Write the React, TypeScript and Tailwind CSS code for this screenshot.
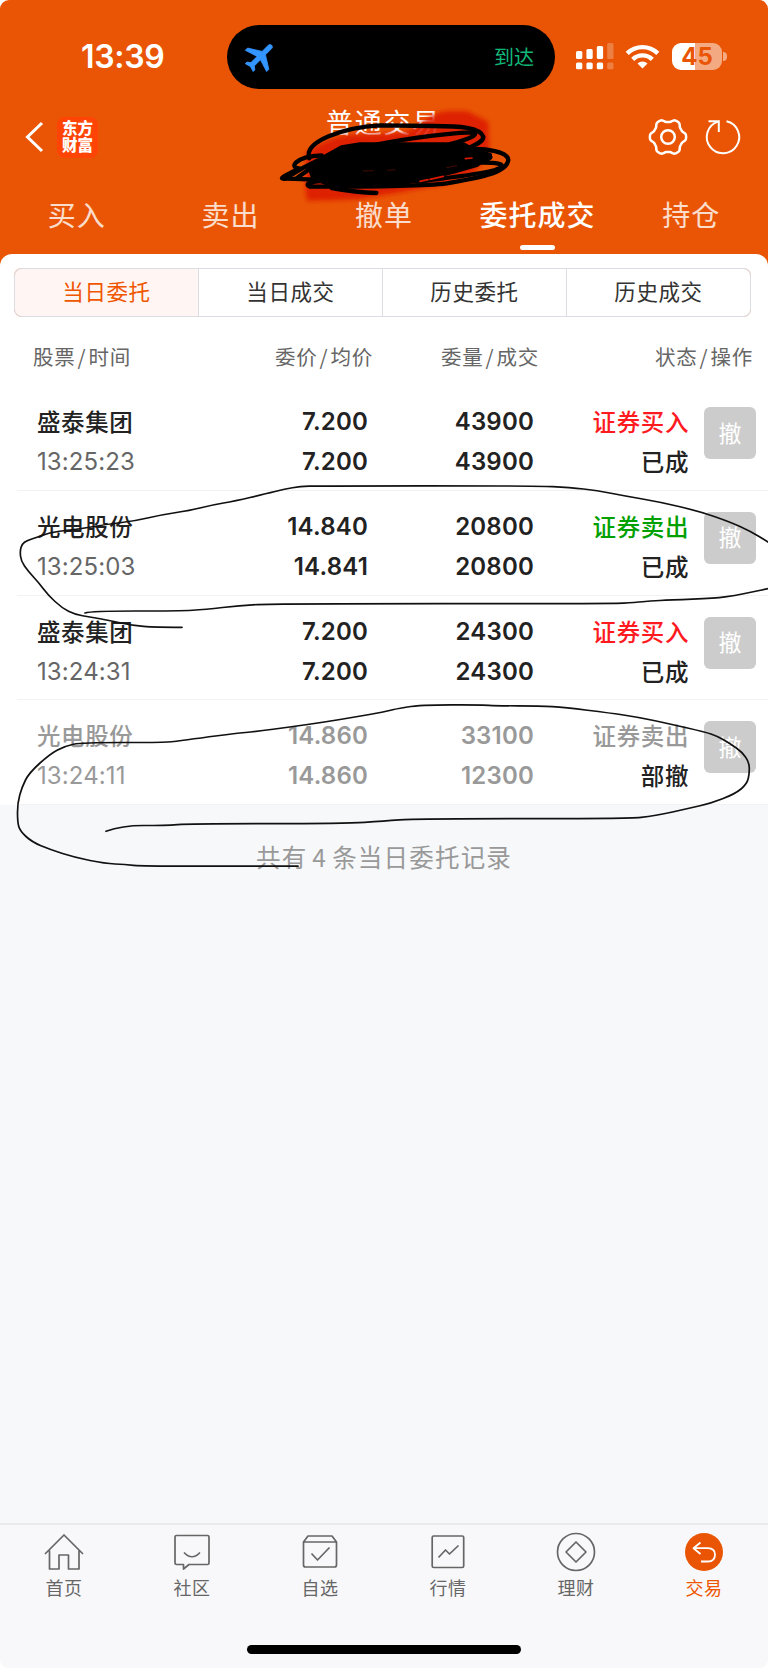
import clsx from "clsx"
import type { ReactNode } from "react"

type Point = [number, number]

interface Order {
  id: number
  name: string
  time: string
  price: string
  average: string
  volume: string
  filled: string
  side: string
  sideClass: string
  status: string
  muted?: boolean
}

const orders: Order[] = [
  { id: 1, name: "盛泰集团", time: "13:25:23", price: "7.200", average: "7.200", volume: "43900", filled: "43900", side: "证券买入", sideClass: "text-[#ff1a1f]", status: "已成" },
  { id: 2, name: "光电股份", time: "13:25:03", price: "14.840", average: "14.841", volume: "20800", filled: "20800", side: "证券卖出", sideClass: "text-[#00a000]", status: "已成" },
  { id: 3, name: "盛泰集团", time: "13:24:31", price: "7.200", average: "7.200", volume: "24300", filled: "24300", side: "证券买入", sideClass: "text-[#ff1a1f]", status: "已成" },
  { id: 4, name: "光电股份", time: "13:24:11", price: "14.860", average: "14.860", volume: "33100", filled: "12300", side: "证券卖出", sideClass: "text-[#999999]", status: "部撤", muted: true },
]

const tabs = ["买入", "卖出", "撤单", "委托成交", "持仓"]
const segments = ["当日委托", "当日成交", "历史委托", "历史成交"]

// Smooths a hand drawn stroke by curving through the midpoints
function smooth(points: Point[]) {
  let d = `M${points[0][0]} ${points[0][1]}`
  for (let i = 1; i < points.length - 1; i++) {
    const [x, y] = points[i]
    const [nx, ny] = points[i + 1]
    d += ` Q${x} ${y} ${(x + nx) / 2} ${(y + ny) / 2}`
  }
  const last = points[points.length - 1]
  return `${d} L${last[0]} ${last[1]}`
}

const strokeA: Point[] = [
  [182, 627.3], [155, 627.3], [132, 625.5], [110, 620.5], [90, 617], [75, 614.5], [62, 608], [48, 595], [39, 583], [28, 571], [21, 561], [20, 551],
  [22, 544], [27, 540.5], [38, 537], [52, 532], [80, 529], [105, 524.5], [135, 521], [160, 515], [190, 510.5], [212, 505], [235, 501],
  [265, 494], [285, 489], [300, 486.5], [318, 485.8], [535, 485.8], [570, 487.5], [597, 490.5], [625, 496], [660, 502], [700, 511.5],
  [730, 522], [750, 531], [769, 542.5],
]
const strokeB: Point[] = [
  [85, 613], [91, 611], [180, 611], [205, 609.5], [240, 605.5], [275, 603.6], [612, 603.6], [635, 602.5], [650, 601], [670, 600], [715, 598.3],
  [735, 595.5], [752, 592], [769, 588.5],
]
const strokeC: Point[] = [
  [106, 831.3], [122, 825.5], [165, 825.5], [190, 823.6], [345, 823.6], [384, 821], [415, 818.6], [627, 818.6], [655, 816], [690, 808],
  [710, 803.5], [735, 794], [747, 784], [749.5, 773], [749, 762], [742, 752], [730, 743.5], [717, 736], [705, 732], [670, 724], [640, 717.5],
  [610, 713], [565, 707.5], [540, 705.8], [495, 705.8], [483, 704.8], [420, 705], [395, 709], [384, 712], [355, 717], [325, 722],
  [290, 727], [256, 731.5], [235, 733.5], [200, 738], [175, 741.5], [160, 742.5], [82, 742.5], [65, 746], [50, 754], [29, 773], [22, 787],
  [17.5, 803], [17.5, 822], [20, 831], [32, 842], [50, 849.5], [75, 857.5], [105, 863.5], [125, 864.5], [142, 866.2], [298, 866.2],
]

const gear: Point[] = Array.from({ length: 73 }, (_, i) => {
  const a = (i * Math.PI) / 36
  const r = 16.6 + 1.6 * Math.tanh(2 * Math.cos(6 * a))
  return [20 + r * Math.cos(a), 20 + r * Math.sin(a)]
})

function StatusBar() {
  return (
    <div className="flex h-[113px] items-center">
      <div className="w-[227px] pl-[81px] font-['Inter'] text-[32px] leading-[40px] font-semibold tracking-[-0.3px]">13:39</div>
      <div className="flex h-[64px] w-[328px] items-center justify-between rounded-full bg-black pr-[21px] pl-[15px]">
        <svg width="38" height="38" viewBox="0 0 24 24">
          <path
            transform="rotate(45 12 12)"
            fill="#3395ff"
            stroke="#3395ff"
            strokeWidth=".5"
            strokeLinejoin="round"
            d="M21 16v-2l-8-5V3.5c0-.83-.67-1.5-1.5-1.5S10 2.67 10 3.5V9l-8 5v2l8-2.5V19l-2 1.5V22l3.5-1 3.5 1v-1.5L13 19v-5.5l8 2.5z"
          />
        </svg>
        <span className="text-[20px] text-[#12b878]">到达</span>
      </div>
      <svg className="ml-[21px]" width="38" height="28" viewBox="0 -2 38 28" fill="white">
        <rect x="0" y="6" width="6.3" height="8" rx="1.5" />
        <rect x="10.4" y="4" width="6.3" height="10" rx="1.5" />
        <rect x="20.8" y="1" width="6.3" height="13" rx="1.5" />
        <rect x="31.2" y="-2" width="6.3" height="16" rx="1.5" opacity=".25" />
        <rect x="0" y="17.500" width="6.3" height="6.800" rx="1.5" />
        <rect x="10.4" y="17.500" width="6.3" height="6.800" rx="1.5" />
        <rect x="20.8" y="17.500" width="6.3" height="6.800" rx="1.5" />
        <rect x="31.2" y="17.500" width="6.3" height="6.800" rx="1.5" opacity=".25" />
      </svg>
      <svg className="ml-[11px]" width="35" height="25" viewBox="0 0 35 25" fill="none" stroke="white" strokeWidth="4.4">
        <path d="M2.2 9.3a22 22 0 0 1 30.6 0" />
        <path d="M7.7 15.4a14 14 0 0 1 19.6 0" />
        <path d="M17.500 24.500l-5-5a7.200 7.200 0 0 1 10 0z" fill="white" stroke="none" />
      </svg>
      <div className="ml-[12px] flex h-[27px] w-[50px] items-center justify-center rounded-[9px] bg-linear-to-r from-white from-45% to-white/50 to-45% font-['Inter'] text-[24px] leading-none font-bold text-[#e95504]">
        45
      </div>
      <div className="ml-[1px] h-[9px] w-[4px] rounded-r-full bg-white/50" />
    </div>
  )
}

function TitleBar() {
  return (
    <div className="flex h-[64px] items-center">
      <svg className="ml-[24px]" width="22" height="34" viewBox="0 0 22 34" fill="none" stroke="white" strokeWidth="3">
        <path d="M18 3L3.500 17L18 31" />
      </svg>
      <div className="ml-[11px] flex h-[41px] w-[41px] items-center justify-center rounded-[8px] bg-[#ff4405] pb-[2px] text-[15.500px] leading-[17.500px] font-black">
        <span className="w-[31px] break-all">东方财富</span>
      </div>
      <div className="flex h-full flex-1 justify-center pt-[1px] pl-[21px] text-[27px] leading-[32px] tracking-[1.800px]">普通交易</div>
      <svg className="mr-[15px]" width="40" height="40" viewBox="0 0 40 40" fill="none" stroke="white" strokeWidth="2.500" strokeLinejoin="round">
        <path d={smooth(gear) + "Z"} />
        <circle cx="20" cy="20" r="6.800" />
      </svg>
      <svg className="mr-[25px]" width="40" height="40" viewBox="0 0 40 40" fill="none" stroke="white" strokeWidth="2">
        <path d="M23.500 4.200A16.200 16.200 0 1 1 15 4.600" />
        <path d="M5.500 4.200H15.800V15" />
      </svg>
    </div>
  )
}

function OrderRow({ order }: { order: Order }) {
  return (
    <div className="relative grid h-[104.800px] grid-cols-[181px_150px_166px_155px_68px] pl-[37px] text-[23.500px] leading-[40px] font-medium text-[#222222]">
      <div className={clsx("pt-[15px]", order.muted && "text-[#999999]")}>
        <p className="tracking-[0.600px]">{order.name}</p>
        <p className={clsx("mt-px font-['Inter'] text-[24px] font-normal tracking-[0.100px]", !order.muted && "text-[#666666]")}>{order.time}</p>
      </div>
      <div className={clsx("pt-[16px] text-right font-['Inter'] text-[24px] font-semibold tracking-[0.200px]", order.muted && "text-[#999999]")}>
        <p>{order.price}</p>
        <p>{order.average}</p>
      </div>
      <div className={clsx("pt-[16px] text-right font-['Inter'] text-[24px] font-semibold tracking-[0.200px]", order.muted && "text-[#999999]")}>
        <p>{order.volume}</p>
        <p>{order.filled}</p>
      </div>
      <div className="pt-[15px] text-right tracking-[0.600px]">
        <p className={order.sideClass}>{order.side}</p>
        <p>{order.status}</p>
      </div>
      <button className="mt-[21px] ml-[15px] flex h-[52px] w-[52px] items-center justify-center rounded-[6px] bg-[#cccccc] pb-[3px] text-[23px] font-normal text-white">撤</button>
      <div className="absolute right-0 bottom-0 left-[17px] h-px bg-[#f2f2f3]" />
    </div>
  )
}

function NavItem({ label, active, children }: { label: string; active?: boolean; children: ReactNode }) {
  return (
    <div className={clsx("flex flex-1 flex-col items-center pt-[7px]", active ? "text-[#ee5500]" : "text-[#666666]")}>
      <svg width="40" height="40" viewBox="0 0 40 40" fill="none" stroke="currentColor" strokeWidth="1.700" strokeLinejoin="round">
        {children}
      </svg>
      <span className="mt-[2px] text-[18px] leading-[26px] tracking-[0.600px]">{label}</span>
    </div>
  )
}

function Scribble() {
  return (
    <svg className="absolute top-[90px] left-[260px]" width="270" height="120" viewBox="0 0 810 360" fill="none" stroke="black" strokeWidth="13" strokeLinecap="round" strokeLinejoin="round">
      <defs>
        <filter id="soft" x="-10%" y="-10%" width="120%" height="120%">
          <feGaussianBlur stdDeviation="6" />
        </filter>
      </defs>
      <path
        filter="url(#soft)"
        fill="#dc1800"
        fillOpacity=".86"
        stroke="none"
        d="M138 190Q190 145 270 134L420 128Q455 125 490 92Q530 66 560 64H622L684 95L688 190L640 250L560 282L410 308L290 328L145 332Q136 325 138 300z"
      />
      <path
        fill="black"
        d="M150 235L190 203L245 172L300 163H610L640 180L690 195L650 225L580 245L480 270L380 285H215L160 265z"
      />
      <path d="M148 205C130 155 250 112 360 106L520 108C600 108 660 112 670 140C670 158 640 165 615 180" />
      <path d="M300 175C400 150 550 130 635 127C660 130 640 145 570 162" />
      <path d="M185 196C100 200 88 235 118 235C80 255 50 268 75 266C110 265 250 275 330 270" />
      <path d="M75 266L130 233L190 203M110 265L165 225" />
      <path d="M620 178C680 174 744 185 745 210C740 250 650 265 560 280C480 290 300 290 150 290C130 282 150 270 240 272" />
      <path d="M630 182C720 200 700 205 640 218C720 215 750 225 705 240C650 255 570 262 470 275" />
      <path d="M215 294C270 304 310 308 349 309" />
      <path d="M616 206L636 204M510 268L550 259M480 274L504 269" stroke="#dc1800" strokeWidth="5" />
      <path d="M310 243L340 242M382 241L405 239M560 233L590 227" stroke="#651000" strokeWidth="2" />
    </svg>
  )
}

export default function App() {
  return (
    <div className="relative h-[1669px] w-[768px] overflow-hidden bg-white font-['Noto_Sans_CJK_SC',sans-serif]">
      <div className="flex h-[1668px] flex-col overflow-hidden rounded-[9px] bg-[#f7f8fa]">
        <div className="bg-[#e95504] text-white">
          <header className="h-[254px]">
            <StatusBar />
            <div className="-mt-[8px]">
              <TitleBar />
            </div>
            <nav className="mt-[21px] flex text-[28px] leading-[48px] tracking-[1px]">
              {tabs.map((tab) => {
                const active = tab === "委托成交"
                return (
                  <div key={tab} className={clsx("flex flex-1 flex-col items-center", active ? "font-medium" : "font-normal text-white/80")}>
                    {tab}
                    {active && <span className="mt-[7px] h-[5px] w-[35px] rounded-full bg-white" />}
                  </div>
                )
              })}
            </nav>
          </header>
          <div className="h-[132px] rounded-t-[12px] bg-white pt-[14px]">
            <div className="mr-[17px] ml-[14px] flex h-[49px] rounded-[8px] bg-[#f0a27c]">
              {segments.map((segment, i) => (
                <div
                  key={segment}
                  className={clsx(
                    "flex flex-1 items-center justify-center border-y border-r border-[#dcdde2] pb-[2px] text-[21.500px] tracking-[0.600px]",
                    i === 0 ? "rounded-l-[8px] border-l bg-[#fff5f2] text-[#f05500]" : "bg-white text-[#333333]",
                    i === 3 && "rounded-r-[8px]",
                  )}
                >
                  {segment}
                </div>
              ))}
            </div>
            <div className="mt-[19px] grid grid-cols-[180px_160px_166px_214px] pl-[33px] text-[20.500px] leading-[40px] tracking-[0.800px] text-[#666666]">
              <span>股票<i className="px-[2px] not-italic">/</i>时间</span>
              <span className="text-right">委价<i className="px-[2px] not-italic">/</i>均价</span>
              <span className="text-right">委量<i className="px-[2px] not-italic">/</i>成交</span>
              <span className="text-right">状态<i className="px-[2px] not-italic">/</i>操作</span>
            </div>
          </div>
        </div>

        <main className="bg-white">
          {orders.map((order) => (
            <OrderRow key={order.id} order={order} />
          ))}
        </main>
        <p className="pt-[32px] text-center text-[24.500px] leading-[40px] tracking-[1.200px] text-[#999999]">
          共有<span className="mx-[5px]">4</span>条当日委托记录
        </p>

        <footer className="mt-auto h-[145px] border-t-2 border-[#e9eaec] bg-[#f8f8fa]">
          <div className="flex">
            <NavItem label="首页">
              <path d="M1 22L20 3L39 22M5.500 18.500V37H15V23H24.500V37H35V18.500" />
            </NavItem>
            <NavItem label="社区">
              <path d="M4.500 3.500H35.500Q37 3.500 37 5V31Q37 32.500 35.500 32.500H17L11.500 37V32.500H4.500Q3 32.500 3 31V5Q3 3.500 4.500 3.500zM12 20.500Q20 29 28 20.500" />
            </NavItem>
            <NavItem label="自选">
              <path d="M3.500 10L8 4H32L36.500 10V33Q36.500 35 34.500 35H5.500Q3.500 35 3.500 33zM3.500 10H36.500M11.500 21.500L17.500 28L29.500 15.500" />
            </NavItem>
            <NavItem label="行情">
              <rect x="4.200" y="4" width="31.500" height="31.500" rx="1.500" />
              <path d="M10.500 25.500L17.500 18L21.500 22L30.500 13.500" />
            </NavItem>
            <NavItem label="理财">
              <circle cx="20" cy="20" r="18.500" />
              <path d="M20 10L30 20L20 30L10 20z" />
            </NavItem>
            <NavItem label="交易" active>
              <circle cx="20" cy="20" r="19" fill="#e95504" stroke="none" />
              <path d="M16.500 10.500L9.500 16.200L16.500 22M9.500 16.200H24Q31 16.500 31 22.500Q31 29.500 24 29.500H17" stroke="white" strokeWidth="1.800" />
            </NavItem>
          </div>
          <div className="mx-auto mt-[45px] h-[9px] w-[274px] rounded-full bg-black" />
        </footer>
      </div>

      <Scribble />
      {/* Pen marks around the sell orders */}
      <svg className="pointer-events-none absolute top-0 left-0" width="768" height="900" viewBox="0 0 768 900" fill="none" stroke="#111111" strokeWidth="1.700" strokeLinecap="round" strokeLinejoin="round">
        <path d={smooth(strokeA)} />
        <path d={smooth(strokeB)} />
        <path d={smooth(strokeC)} />
      </svg>
    </div>
  )
}
